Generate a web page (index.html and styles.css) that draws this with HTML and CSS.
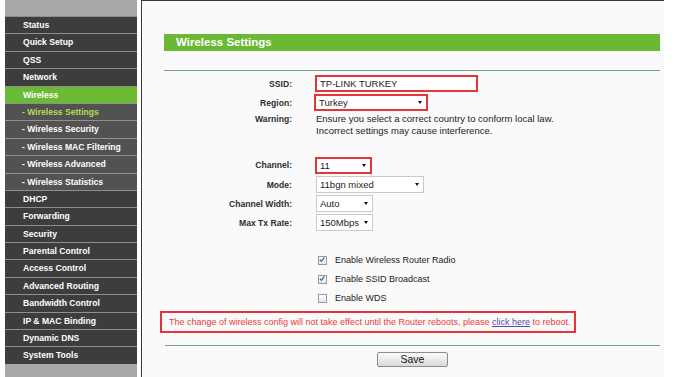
FILE: index.html
```html
<!DOCTYPE html>
<html>
<head>
<meta charset="utf-8">
<title>Wireless Settings</title>
<link rel="stylesheet" href="styles.css">
</head>
<body>
<div class="page">
  <nav class="sidebar">
    <ul class="menu">
      <li class="item">Status</li>
      <li class="item">Quick Setup</li>
      <li class="item">QSS</li>
      <li class="item">Network</li>
      <li class="item active">Wireless</li>
      <li class="item sub current">- Wireless Settings</li>
      <li class="item sub">- Wireless Security</li>
      <li class="item sub">- Wireless MAC Filtering</li>
      <li class="item sub">- Wireless Advanced</li>
      <li class="item sub">- Wireless Statistics</li>
      <li class="item">DHCP</li>
      <li class="item">Forwarding</li>
      <li class="item">Security</li>
      <li class="item">Parental Control</li>
      <li class="item">Access Control</li>
      <li class="item">Advanced Routing</li>
      <li class="item">Bandwidth Control</li>
      <li class="item">IP &amp; MAC Binding</li>
      <li class="item">Dynamic DNS</li>
      <li class="item">System Tools</li>
    </ul>
  </nav>
  <main class="main">
    <div class="title">Wireless Settings</div>
    <div class="rule"></div>
    <div class="form">
      <div class="row">
        <span class="lbl">SSID:</span>
        <span class="field"><span class="input hl ssid">TP-LINK TURKEY</span></span>
      </div>
      <div class="row">
        <span class="lbl">Region:</span>
        <span class="field"><span class="select hl w-region"><span>Turkey</span><i class="caret"></i></span></span>
      </div>
      <div class="row warn">
        <span class="lbl">Warning:</span>
        <span class="field note">Ensure you select a correct country to conform local law.<br>Incorrect settings may cause interference.</span>
      </div>
      <div class="row first-sel">
        <span class="lbl">Channel:</span>
        <span class="field"><span class="select hl w-small"><span>11</span><i class="caret"></i></span></span>
      </div>
      <div class="row">
        <span class="lbl">Mode:</span>
        <span class="field"><span class="select w-mode"><span>11bgn mixed</span><i class="caret"></i></span></span>
      </div>
      <div class="row">
        <span class="lbl">Channel Width:</span>
        <span class="field"><span class="select w-small"><span>Auto</span><i class="caret"></i></span></span>
      </div>
      <div class="row">
        <span class="lbl">Max Tx Rate:</span>
        <span class="field"><span class="select w-small"><span>150Mbps</span><i class="caret"></i></span></span>
      </div>

      <div class="checks">
        <div class="check-row">
          <span class="cb"><svg viewBox="0 0 9 9" width="9" height="9"><path d="M2 4.6 L3.9 6.6 L7.2 2.2" fill="none" stroke="#3d5fa6" stroke-width="1.4"/></svg></span>
          <span class="check-text">Enable Wireless Router Radio</span>
        </div>
        <div class="check-row">
          <span class="cb"><svg viewBox="0 0 9 9" width="9" height="9"><path d="M2 4.6 L3.9 6.6 L7.2 2.2" fill="none" stroke="#3d5fa6" stroke-width="1.4"/></svg></span>
          <span class="check-text">Enable SSID Broadcast</span>
        </div>
        <div class="check-row">
          <span class="cb"></span>
          <span class="check-text">Enable WDS</span>
        </div>
      </div>

      <div class="message">The change of wireless config will not take effect until the Router reboots, please <a class="link" href="#">click here</a> to reboot.</div>
      <div class="rule rule-bottom"></div>
      <button class="save" type="button">Save</button>
    </div>
  </main>
</div>
</body>
</html>
```

FILE: styles.css
```css
* { box-sizing: border-box; }
html, body { margin: 0; padding: 0; }
body {
  background: #ffffff;
  font-family: "Liberation Sans", Arial, sans-serif;
  width: 675px;
  height: 377px;
  overflow: hidden;
  color: #222;
}
.page { display: flex; height: 377px; }

/* sidebar */
.sidebar {
  flex: none;
  margin-left: 5px;
  width: 132px;
  background: #a8a8a8;
  padding-top: 16px;
}
.menu { list-style: none; margin: 0; padding: 0; }
.item {
  height: 17.4px;
  border-top: 1px solid #8f8f8f;
  background: #3d3d3d;
  color: #fff;
  font-weight: bold;
  font-size: 8.6px;
  line-height: 16.4px;
  padding-left: 18px;
  white-space: nowrap;
}
.item.sub { background: #525252; padding-left: 17px; }
.item.active { background: #6aba34; }
.item.current { color: #b4de55; }

/* main */
.main {
  flex: none;
  margin-left: 4px;
  width: 523px;
  border-left: 1px solid #3a3a3a;
  border-top: 1px solid #3a3a3a;
  background: #fafafa;
  padding-left: 22px;
}
.title {
  margin-top: 33px;
  width: 496px;
  height: 17px;
  background: #6ab934;
  color: #fff;
  font-weight: bold;
  font-size: 11.5px;
  line-height: 17px;
  padding-left: 12px;
}
.rule {
  margin-top: 19px;
  width: 496px;
  border-top: 1px solid #74a393;
}
.form { margin-top: 3px; }
.row { display: flex; align-items: center; height: 19px; }
.row.warn { align-items: flex-start; height: 24px; margin-top: 1px; line-height: 12px; }
.row.first-sel { margin-top: 18px; height: 20px; }
.lbl {
  flex: none;
  width: 128px;
  text-align: right;
  font-weight: bold;
  font-size: 8.6px;
  color: #2e2e2e;
}
.field { margin-left: 24px; font-size: 9.5px; color: #222; }
.note { font-size: 9.5px; }

.input {
  display: flex;
  align-items: center;
  margin-left: -1px;
  height: 17px;
  background: #fff;
  padding-left: 4px;
}
.ssid { width: 163px; }
.select {
  display: flex;
  align-items: center;
  justify-content: space-between;
  height: 17px;
  border: 1px solid #cacaca;
  background: #fff;
  padding: 0 4px 0 3px;
  white-space: nowrap;
}
.hl { border: 2px solid #e6343d; margin-left: -1px; padding-left: 3px; }
.w-region { width: 114px; margin-left: -2px; }
.w-small { width: 57px; }
.w-mode { width: 108px; }
.caret {
  flex: none;
  width: 0;
  height: 0;
  margin-left: 3px;
  border-left: 2.5px solid transparent;
  border-right: 2.5px solid transparent;
  border-top: 3px solid #111;
}

/* checkboxes */
.checks { margin-top: 18.5px; }
.check-row {
  display: flex;
  align-items: center;
  height: 19px;
  padding-left: 154px;
}
.cb {
  flex: none;
  width: 9px;
  height: 9px;
  border: 1px solid #9a9a9a;
  background: linear-gradient(#ffffff, #e6e6e6);
  display: flex;
  align-items: center;
  justify-content: center;
}
.cb svg { display: block; margin-left: -1px; margin-top: -1px; }
.check-text { margin-left: 8px; font-size: 9px; color: #222; }

/* message */
.message {
  margin-top: 3.5px;
  margin-left: -4px;
  width: 416px;
  height: 22px;
  border: 2px solid #e6343d;
  padding-left: 7px;
  color: #e8403d;
  font-size: 9px;
  line-height: 18px;
  white-space: nowrap;
}
.link { color: #5b4aad; text-decoration: underline; }
.rule-bottom { margin-top: 12px; margin-left: 1px; width: 495px; }
.save {
  display: block;
  margin: 6px 0 0 213px;
  width: 71px;
  height: 15px;
  padding: 0;
  border: 1px solid #8c8c8c;
  border-radius: 2px;
  background: linear-gradient(#fbfbfb, #dadada);
  font-family: "Liberation Sans", Arial, sans-serif;
  font-size: 10.5px;
  line-height: 13px;
  color: #111;
}
```
